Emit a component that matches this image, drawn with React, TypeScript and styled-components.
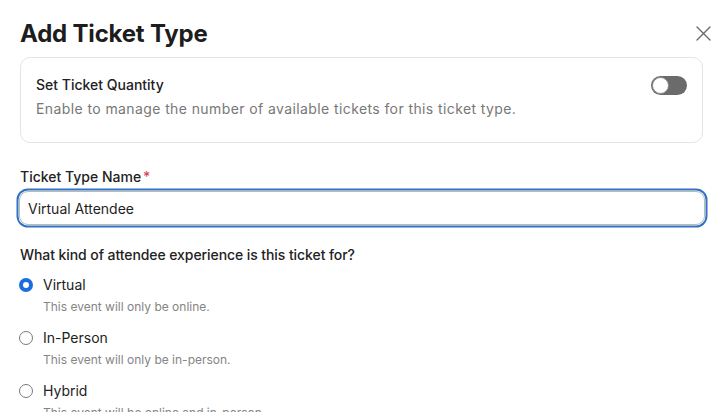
import React, { useState } from 'react'
import styled, { createGlobalStyle } from 'styled-components'

const GlobalStyle = createGlobalStyle`
  body {
    margin: 0;
    background: #fff;
    font-family: 'Inter', 'Noto Sans', sans-serif;
    color: #222;
    -webkit-font-smoothing: antialiased;
  }
`

const Modal = styled.div`
  width: 724px;
  height: 412px;
  box-sizing: border-box;
  padding: 19px 21px 0 20px;
  overflow: hidden;
`

const Header = styled.div`
  display: flex;
  justify-content: space-between;
  align-items: center;
  height: 29px;
`

const Title = styled.h1`
  margin: 0;
  font-size: 24px;
  line-height: 29px;
  font-weight: 700;
  color: #1d1d1d;
  letter-spacing: -0.2px;
`

const CloseButton = styled.button`
  border: 0;
  background: none;
  padding: 0;
  margin-right: -8px;
  width: 16px;
  height: 16px;
  display: flex;
  align-items: center;
  justify-content: center;
  cursor: pointer;
`

const Card = styled.div`
  margin-top: 9px;
  border: 1px solid #e4e4e4;
  border-radius: 10px;
  padding: 17px 15px 23px 15px;
  display: flex;
  justify-content: space-between;
  align-items: flex-start;
`

const CardText = styled.div`
  display: flex;
  flex-direction: column;
  gap: 4px;
`

const CardTitle = styled.div`
  font-size: 14px;
  line-height: 20px;
  font-weight: 500;
  color: #222;
`

const CardDesc = styled.div`
  font-size: 14px;
  line-height: 20px;
  color: #777;
  letter-spacing: 0.4px;
`

const Toggle = styled.button<{ $on: boolean }>`
  position: relative;
  margin-top: 1px;
  width: 36px;
  height: 19px;
  border-radius: 10px;
  border: 0;
  padding: 0;
  background: ${(p) => (p.$on ? '#1a73e8' : '#6b6b6b')};
  cursor: pointer;
  &::after {
    content: '';
    position: absolute;
    top: 1px;
    left: ${(p) => (p.$on ? '18px' : '1px')};
    width: 17px;
    height: 17px;
    border-radius: 50%;
    background: #fff;
    box-sizing: border-box;
    border: 1px solid #8a8a8a;
  }
`

const Field = styled.div`
  margin-top: 24px;
  display: flex;
  flex-direction: column;
  gap: 4px;
`

const Label = styled.label`
  font-size: 14px;
  line-height: 20px;
  font-weight: 500;
  color: #222;
  & span {
    color: #d6455d;
    margin-left: 2px;
  }
`

const Input = styled.input`
  box-sizing: border-box;
  margin-left: -1px;
  width: calc(100% + 3px);
  height: 34px;
  border: 1.5px solid #b9b9b9;
  border-radius: 9px;
  padding: 0 8px;
  font-family: inherit;
  font-size: 14px;
  color: #1f1f1f;
  outline: none;
  box-shadow: 0 0 0 0.5px #fff, 0 0 0 2.5px #2f73c2;
`

const Question = styled.div`
  margin-top: 20px;
  font-size: 14px;
  line-height: 20px;
  font-weight: 500;
  color: #222;
  letter-spacing: -0.08px;
`

const Options = styled.div`
  margin-top: 10px;
  display: flex;
  flex-direction: column;
  gap: 13px;
`

const Option = styled.label`
  display: grid;
  grid-template-columns: 14px 1fr;
  column-gap: 9px;
  row-gap: 4px;
  align-items: center;
  cursor: pointer;
`

const Radio = styled.span<{ $checked: boolean }>`
  width: 14px;
  height: 14px;
  box-sizing: border-box;
  border-radius: 50%;
  margin-left: -1px;
  border: ${(p) => (p.$checked ? '4.5px solid #1a6fe0' : '1.5px solid #7a7a7a')};
  background: #fff;
`

const OptionLabel = styled.span`
  font-size: 14px;
  line-height: 20px;
  color: #222;
`

const OptionDesc = styled.span`
  grid-column: 2;
  font-size: 12px;
  line-height: 16px;
  color: #858585;
`

const options = [
  { label: 'Virtual', desc: 'This event will only be online.' },
  { label: 'In-Person', desc: 'This event will only be in-person.' },
  { label: 'Hybrid', desc: 'This event will be online and in-person.' },
]

export default function App() {
  const [on, setOn] = useState(false)
  const [kind, setKind] = useState('Virtual')
  const [name, setName] = useState('Virtual Attendee')

  return (
    <>
      <GlobalStyle />
      <Modal>
        <Header>
          <Title>Add Ticket Type</Title>
          <CloseButton aria-label="Close">
            <svg width="15" height="15" viewBox="0 0 15 15">
              <path d="M1 1 L14 14 M14 1 L1 14" stroke="#6a6a6a" strokeWidth="1.4" strokeLinecap="round" />
            </svg>
          </CloseButton>
        </Header>

        <Card>
          <CardText>
            <CardTitle>Set Ticket Quantity</CardTitle>
            <CardDesc>Enable to manage the number of available tickets for this ticket type.</CardDesc>
          </CardText>
          <Toggle $on={on} onClick={() => setOn(!on)} aria-label="Set Ticket Quantity" />
        </Card>

        <Field>
          <Label>
            Ticket Type Name<span>*</span>
          </Label>
          <Input value={name} onChange={(e) => setName(e.target.value)} />
        </Field>

        <Question>What kind of attendee experience is this ticket for?</Question>
        <Options>
          {options.map((o) => (
            <Option key={o.label} onClick={() => setKind(o.label)}>
              <Radio $checked={kind === o.label} />
              <OptionLabel>{o.label}</OptionLabel>
              <OptionDesc>{o.desc}</OptionDesc>
            </Option>
          ))}
        </Options>
      </Modal>
    </>
  )
}
